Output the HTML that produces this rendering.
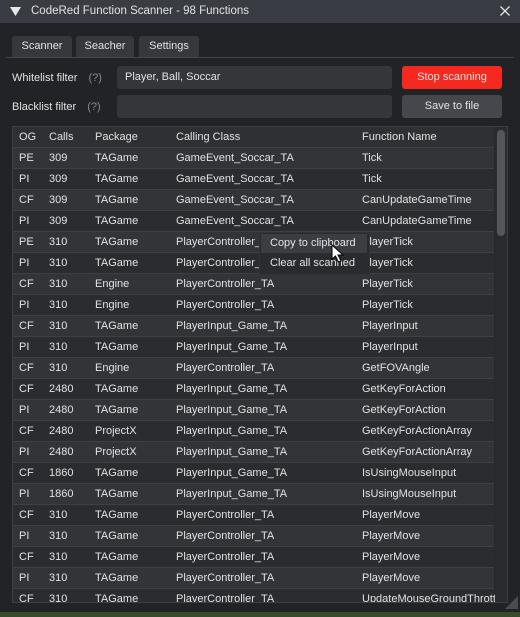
<!DOCTYPE html>
<html><head><meta charset="utf-8"><style>
*{margin:0;padding:0;box-sizing:border-box}
body{width:520px;height:617px;background:#3b4a2a;font-family:"Liberation Sans","DejaVu Sans",sans-serif;font-size:11px;color:#e2e2e2;overflow:hidden;position:relative}
.win{position:absolute;left:0;top:0;width:520px;height:612px;background:#222326}
.title{position:absolute;left:0;top:0;width:520px;height:23px;background:#3a3c43}
.abs{position:absolute;white-space:nowrap}
.tab{position:absolute;top:36px;height:21px;background:#37383d;border-radius:3px 3px 0 0;text-align:center;line-height:21px}
.inp{position:absolute;left:117px;width:275px;height:23px;background:#35363a;border-radius:3px;line-height:23px;padding-left:8px}
.btn{position:absolute;left:402px;width:100px;height:23px;border-radius:3px;text-align:center;line-height:23px}
.table{position:absolute;left:12px;top:126px;width:496px;height:477px;overflow:hidden;border:1px solid #3d3e43;background:#26272a}
.row{position:absolute;left:0;width:481px;height:21px;line-height:20px;border-bottom:1px solid #3f4045}
.row span{position:absolute;top:0}
.c1{left:6px}.c2{left:36px}.c3{left:82px}.c4{left:163px}.c5{left:349px}
</style></head><body>
<div class="win">
<div class="title"></div>
<svg class="abs" style="left:10px;top:7px" width="11" height="9"><polygon points="0,0 11,0 5.5,9" fill="#e8e8e8"/></svg>
<div class="abs" style="left:31px;top:5px;font-size:11.5px">CodeRed Function Scanner - 98 Functions</div>
<svg class="abs" style="left:500px;top:6px" width="10" height="10"><path d="M0.5 0.5L9.5 9.5M9.5 0.5L0.5 9.5" stroke="#e8e8e8" stroke-width="1.3"/></svg>
<div class="tab" style="left:12px;width:60px">Scanner</div>
<div class="tab" style="left:76px;width:58px">Seacher</div>
<div class="tab" style="left:139px;width:60px">Settings</div>
<div class="abs" style="left:6px;top:57px;width:508px;height:1px;background:#45464b"></div>
<div class="abs" style="left:12px;top:72px">Whitelist filter <span style="color:#888;margin-left:8px">(?)</span></div>
<div class="abs" style="left:12px;top:101px">Blacklist filter <span style="color:#888;margin-left:8px">(?)</span></div>
<div class="inp" style="top:66px">Player, Ball, Soccar</div>
<div class="inp" style="top:95px"></div>
<div class="btn" style="top:66px;background:#f5291f">Stop scanning</div>
<div class="btn" style="top:95px;background:#46474c">Save to file</div>
<div class="table">
<div class="row" style="top:0;background:#2f3034;height:21px"><span class="c1">OG</span><span class="c2">Calls</span><span class="c3">Package</span><span class="c4">Calling Class</span><span class="c5">Function Name</span></div>
<div id="rows"></div>
<div class="abs" style="left:482px;top:0;width:12px;height:477px;background:#2a2b2e"></div>
<div class="abs" style="left:484px;top:3px;width:8px;height:106px;background:#55565b;border-radius:4px"></div>
</div>
<div class="abs" style="left:259px;top:232px;width:111px;height:43px;background:#2a2b2f;border:1px solid #333"></div>
<div class="abs" style="left:261px;top:234px;width:106px;height:19px;background:#3c3d42"></div>
<div class="abs" style="left:270px;top:237px">Copy to clipboard</div>
<div class="abs" style="left:270px;top:257px">Clear all scanned</div>
<svg class="abs" style="left:331px;top:244px" width="14" height="20"><path d="M1 1L1 15L4.5 12L7.5 18L10 17L7 11L12 11Z" fill="#fff" stroke="#000" stroke-width="1"/></svg>
<svg class="abs" style="left:505px;top:596px" width="13" height="13"><polygon points="13,0 13,13 0,13" fill="#4a4b50"/></svg>
</div>
<script>
var d=[["PE","309","TAGame","GameEvent_Soccar_TA","Tick"],["PI","309","TAGame","GameEvent_Soccar_TA","Tick"],["CF","309","TAGame","GameEvent_Soccar_TA","CanUpdateGameTime"],["PI","309","TAGame","GameEvent_Soccar_TA","CanUpdateGameTime"],["PE","310","TAGame","PlayerController_TA","PlayerTick"],["PI","310","TAGame","PlayerController_TA","PlayerTick"],["CF","310","Engine","PlayerController_TA","PlayerTick"],["PI","310","Engine","PlayerController_TA","PlayerTick"],["CF","310","TAGame","PlayerInput_Game_TA","PlayerInput"],["PI","310","TAGame","PlayerInput_Game_TA","PlayerInput"],["CF","310","Engine","PlayerController_TA","GetFOVAngle"],["CF","2480","TAGame","PlayerInput_Game_TA","GetKeyForAction"],["PI","2480","TAGame","PlayerInput_Game_TA","GetKeyForAction"],["CF","2480","ProjectX","PlayerInput_Game_TA","GetKeyForActionArray"],["PI","2480","ProjectX","PlayerInput_Game_TA","GetKeyForActionArray"],["CF","1860","TAGame","PlayerInput_Game_TA","IsUsingMouseInput"],["PI","1860","TAGame","PlayerInput_Game_TA","IsUsingMouseInput"],["CF","310","TAGame","PlayerController_TA","PlayerMove"],["PI","310","TAGame","PlayerController_TA","PlayerMove"],["CF","310","TAGame","PlayerController_TA","PlayerMove"],["PI","310","TAGame","PlayerController_TA","PlayerMove"],["CF","310","TAGame","PlayerController_TA","UpdateMouseGroundThrottle"]];
var h="";d.forEach(function(r,i){h+='<div class="row" style="top:'+(21+i*21)+'px;background:'+(i%2?'#2b2c2f':'#333438')+'"><span class="c1">'+r[0]+'</span><span class="c2">'+r[1]+'</span><span class="c3">'+r[2]+'</span><span class="c4">'+r[3]+'</span><span class="c5">'+r[4]+'</span></div>'});
document.getElementById("rows").innerHTML=h;
</script>
</body></html>
